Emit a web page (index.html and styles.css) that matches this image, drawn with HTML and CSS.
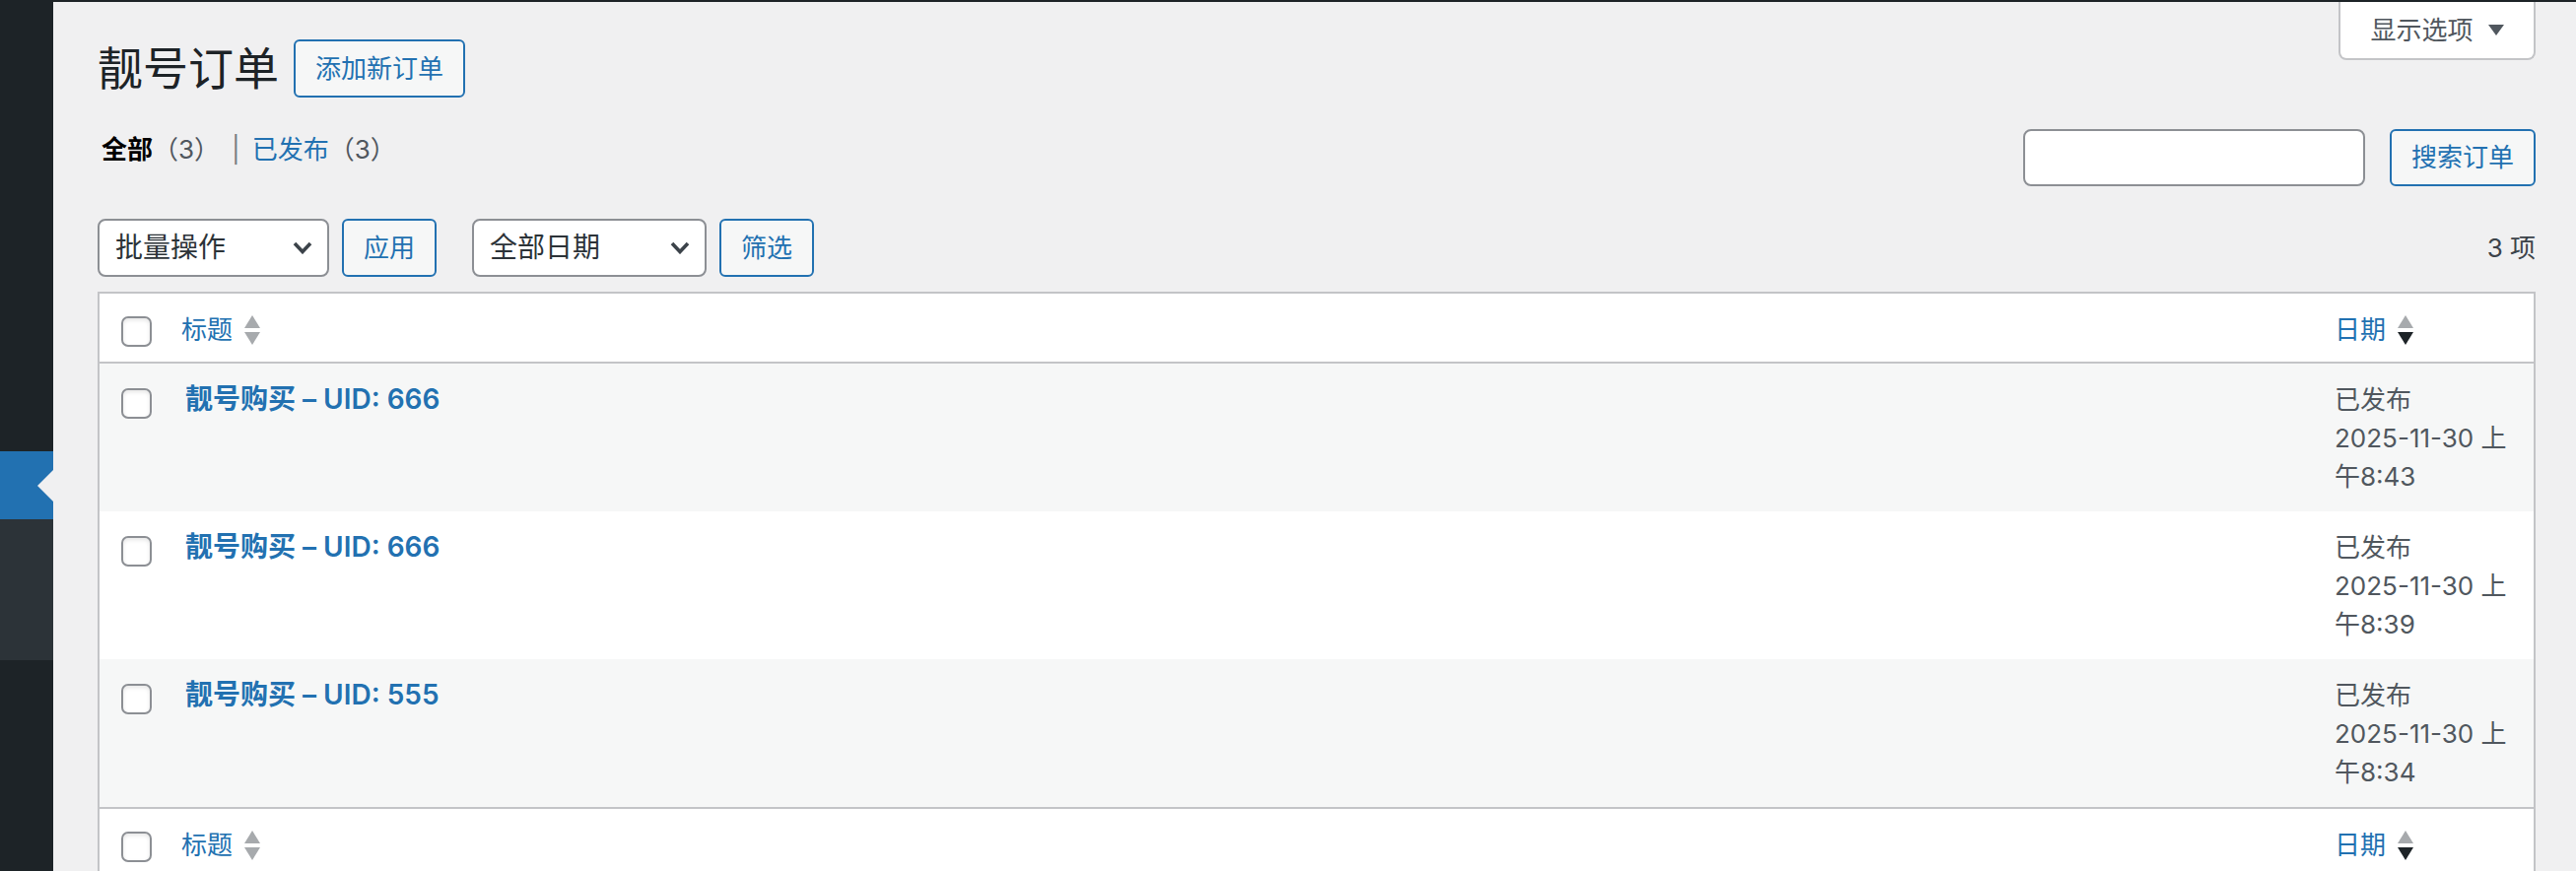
FILE: index.html
```html
<!DOCTYPE html>
<html lang="zh-CN">
<head>
<meta charset="utf-8">
<title>靓号订单</title>
<link rel="stylesheet" href="styles.css">
</head>
<body>
<div class="adminbar"></div>
<div class="page">
  <nav class="sidebar">
    <div class="menu-top"></div>
    <div class="menu-current"><span class="menu-arrow"></span></div>
    <div class="menu-sub"></div>
  </nav>
  <main class="main">
    <div class="head">
      <div class="title-group">
        <h1 class="page-title">靓号订单</h1>
        <a class="btn title-action">添加新订单</a>
      </div>
      <div class="screen-opts">
        <span>显示选项</span>
        <svg class="tri" width="16" height="11" viewBox="0 0 16 11"><polygon points="0,0 16,0 8,11" fill="#50575e"/></svg>
      </div>
    </div>

    <div class="filters">
      <ul class="subsubsub">
        <li><a class="current">全部<span class="count">（3）</span></a><span class="sep">|</span></li>
        <li><a class="link">已发布<span class="count">（3）</span></a></li>
      </ul>
      <div class="search">
        <input class="search-input" type="search" aria-label="搜索订单">
        <button class="btn search-btn">搜索订单</button>
      </div>
    </div>

    <div class="tablenav">
      <div class="select bulk"><span>批量操作</span><svg width="20" height="13" viewBox="0 0 20 13"><polyline points="2,2 10,10.5 18,2" fill="none" stroke="#3c434a" stroke-width="3.6"/></svg></div>
      <button class="btn apply">应用</button>
      <div class="select date-sel"><span>全部日期</span><svg width="20" height="13" viewBox="0 0 20 13"><polyline points="2,2 10,10.5 18,2" fill="none" stroke="#3c434a" stroke-width="3.6"/></svg></div>
      <button class="btn filter">筛选</button>
      <span class="num-items">3 项</span>
    </div>

    <table class="list">
      <thead>
        <tr>
          <th class="check"><input class="cb" type="checkbox"></th>
          <th class="col-title"><a class="sort">标题<svg class="sort-ind" width="16" height="30" viewBox="0 0 16 30"><polygon points="0,13 8,0 16,13" fill="#a7aaad"/><polygon points="0,17 16,17 8,30" fill="#a7aaad"/></svg></a></th>
          <th class="col-date"><a class="sort">日期<svg class="sort-ind" width="16" height="30" viewBox="0 0 16 30"><polygon points="0,13 8,0 16,13" fill="#a7aaad"/><polygon points="0,17 16,17 8,30" fill="#1d2327"/></svg></a></th>
        </tr>
      </thead>
      <tbody>
        <tr class="alt">
          <td class="check"><input class="cb" type="checkbox"></td>
          <td class="col-title"><a class="row-title">靓号购买 – UID: 666</a></td>
          <td class="col-date">已发布<br>2025-11-30 上午8:43</td>
        </tr>
        <tr>
          <td class="check"><input class="cb" type="checkbox"></td>
          <td class="col-title"><a class="row-title">靓号购买 – UID: 666</a></td>
          <td class="col-date">已发布<br>2025-11-30 上午8:39</td>
        </tr>
        <tr class="alt">
          <td class="check"><input class="cb" type="checkbox"></td>
          <td class="col-title"><a class="row-title">靓号购买 – UID: 555</a></td>
          <td class="col-date">已发布<br>2025-11-30 上午8:34</td>
        </tr>
      </tbody>
      <tfoot>
        <tr>
          <th class="check"><input class="cb" type="checkbox"></th>
          <th class="col-title"><a class="sort">标题<svg class="sort-ind" width="16" height="30" viewBox="0 0 16 30"><polygon points="0,13 8,0 16,13" fill="#a7aaad"/><polygon points="0,17 16,17 8,30" fill="#a7aaad"/></svg></a></th>
          <th class="col-date"><a class="sort">日期<svg class="sort-ind" width="16" height="30" viewBox="0 0 16 30"><polygon points="0,13 8,0 16,13" fill="#a7aaad"/><polygon points="0,17 16,17 8,30" fill="#1d2327"/></svg></a></th>
        </tr>
      </tfoot>
    </table>
  </main>
</div>
</body>
</html>
```

FILE: styles.css
```css
* { box-sizing: border-box; }
html, body { margin: 0; padding: 0; }
body {
  width: 2614px;
  height: 884px;
  overflow: hidden;
  background: #f0f0f1;
  font-family: Inter, "Noto Sans CJK SC", sans-serif;
  font-size: 26px;
  line-height: 39px;
  color: #3c434a;
}
.adminbar { height: 2px; background: #1d2327; }
.page { display: flex; height: 882px; }

.sidebar { width: 54px; flex: none; background: #1d2327; display: flex; flex-direction: column; }
.menu-top { height: 456px; }
.menu-current { height: 69px; background: #2271b1; display: flex; align-items: center; justify-content: flex-end; }
.menu-arrow { width: 0; height: 0; border-top: 16px solid transparent; border-bottom: 16px solid transparent; border-right: 16px solid #f0f0f1; }
.menu-sub { height: 143px; background: #2c3338; }

.main { flex: 1; min-width: 0; padding: 0 41px 0 45px; }

.head { display: flex; align-items: flex-start; }
.title-group { display: flex; align-items: center; margin-top: 38px; }
.page-title { margin: 0; font-size: 46px; line-height: 59px; font-weight: 400; color: #1d2327; }
.title-action { margin-left: 15px; }

.btn {
  display: inline-block;
  height: 59px;
  padding: 0 20px;
  border: 2px solid #2271b1;
  border-radius: 6px;
  background: #f6f7f7;
  color: #2271b1;
  font: inherit;
  font-size: 26px;
  line-height: 55px;
  text-decoration: none;
  white-space: nowrap;
}

.screen-opts {
  margin-left: auto;
  width: 200px;
  height: 59px;
  display: flex;
  align-items: center;
  justify-content: center;
  gap: 15px;
  background: #fff;
  border: 2px solid #c3c4c7;
  border-top: 0;
  border-radius: 0 0 8px 8px;
  color: #50575e;
}

.filters { display: flex; align-items: flex-start; margin-top: 32px; }
.subsubsub { list-style: none; margin: 1px 0 0 4px; padding: 0; display: flex; color: #646970; }
.subsubsub li { display: flex; }
.subsubsub .current { color: #000; font-weight: 600; }
.subsubsub .current .count { font-weight: 400; }
.subsubsub .link { color: #2271b1; }
.subsubsub .count { color: #50575e; }
.subsubsub .sep { margin: 0 12px 0 12px; color: #787c82; }

.search { margin-left: auto; display: flex; gap: 25px; }
.search-input {
  width: 347px;
  height: 58px;
  margin: 0;
  border: 2px solid #8c8f94;
  border-radius: 8px;
  background: #fff;
  font: inherit;
}
.search-btn { height: 58px; line-height: 54px; }

.tablenav { display: flex; align-items: center; height: 59px; margin-top: 33px; }
.select {
  display: flex;
  align-items: center;
  justify-content: space-between;
  height: 59px;
  padding: 0 15px 0 16px;
  border: 2px solid #8c8f94;
  border-radius: 8px;
  background: #fff;
  color: #2c3338;
  font-size: 28px;
}
.bulk { width: 235px; }
.date-sel { width: 238px; margin-left: 36px; }
.apply, .filter { margin-left: 13px; }
.num-items { margin-left: auto; color: #3c434a; }

.list {
  width: 100%;
  margin-top: 15px;
  border: 2px solid #c3c4c7;
  border-spacing: 0;
  border-collapse: separate;
  table-layout: fixed;
  background: #fff;
}
.list th {
  text-align: left;
  font-weight: 400;
  padding: 17px 20px 13px 21px;
  vertical-align: top;
}
.list thead th { border-bottom: 2px solid #c3c4c7; }
.list tfoot th { border-top: 2px solid #c3c4c7; }
.list th.check { width: 62px; padding: 23px 0 15px 22px; }
.list th.col-date { width: 222px; padding-left: 20px; }
.list td { padding: 17px 20px 16px; vertical-align: top; color: #50575e; }
.list td.check { padding: 25px 0 0 22px; }
.list td.col-title { padding-left: 25px; }
.list tbody tr.alt { background: #f6f7f7; }

.cb {
  -webkit-appearance: none;
  appearance: none;
  display: block;
  width: 31px;
  height: 31px;
  margin: 0;
  border: 2px solid #8c8f94;
  border-radius: 7px;
  background: #fff;
  box-shadow: inset 0 2px 4px rgba(0, 0, 0, 0.1);
}

.sort { display: inline-flex; align-items: center; gap: 12px; color: #2271b1; text-decoration: none; }
.sort-ind { display: block; }

.row-title { color: #2271b1; font-size: 28px; font-weight: 600; text-decoration: none; }
```
